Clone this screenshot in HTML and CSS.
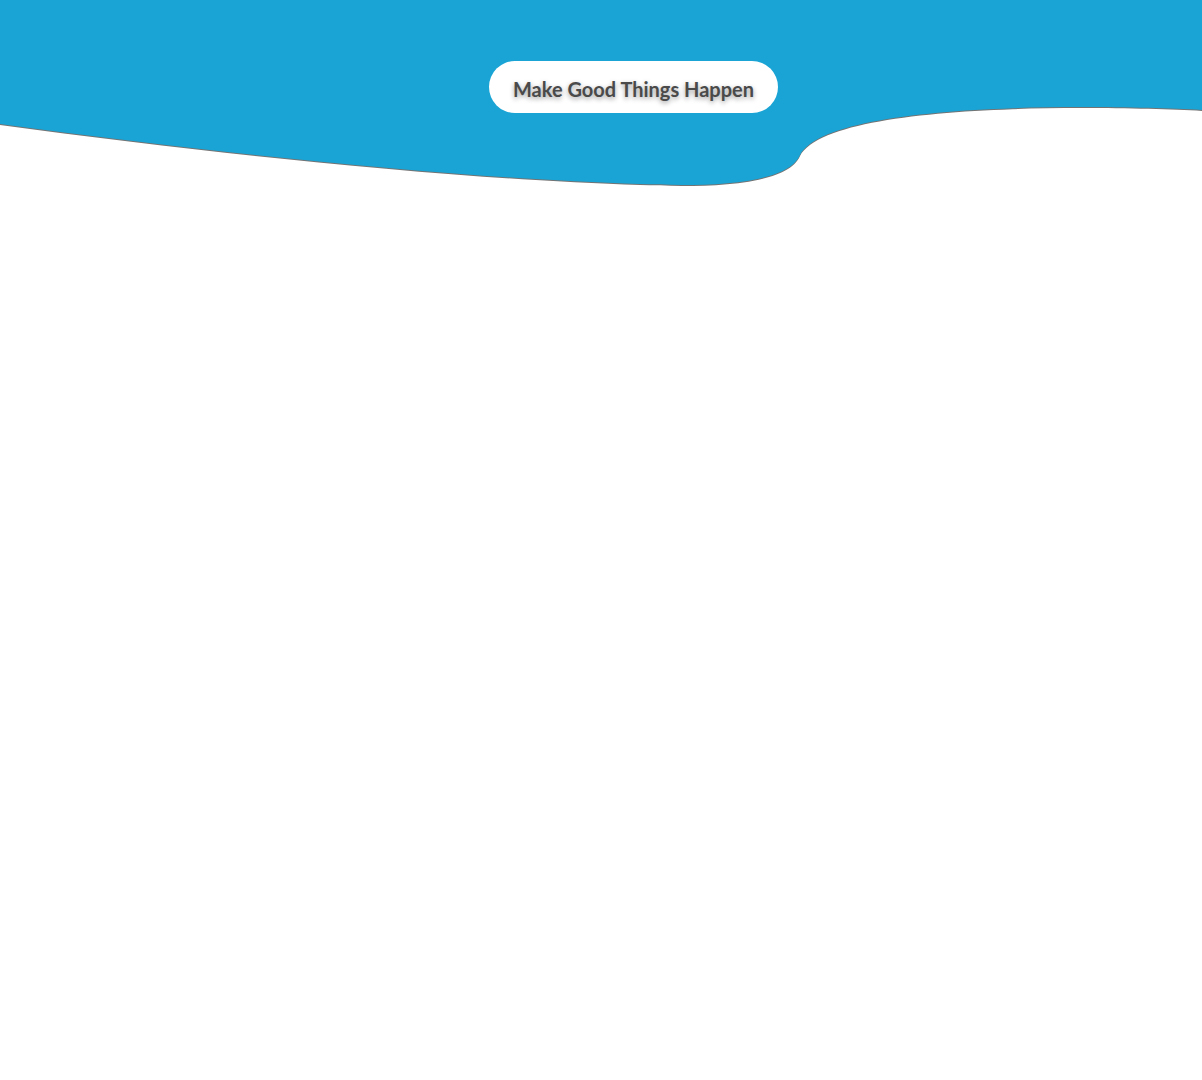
FILE: index.html
```html
<!DOCTYPE html>
<html>
<head>
<meta charset="utf-8">
<link rel="stylesheet" href="styles.css">
</head>
<body>
<header class="hero">
  <svg class="wave" viewBox="0 0 1202 200" width="1202" height="200" preserveAspectRatio="none">
    <path class="wave-shape" d="M0,0 H1202 V110 C1100,105 830,100 800,155 C786,188 690,186 640,184 C470,179 220,154 0,124 Z"/>
  </svg>
  <div class="pill">Make Good Things Happen</div>
</header>
</body>
</html>
```
FILE: styles.css
```css
html, body {
  margin: 0;
  padding: 0;
  background: #ffffff;
}
body {
  font-family: Lato, "Open Sans", sans-serif;
  width: 1202px;
  height: 1080px;
  overflow: hidden;
}
.hero {
  position: relative;
  height: 200px;
  display: flex;
  justify-content: center;
  align-items: flex-start;
  padding-top: 61px;
  box-sizing: border-box;
}
.wave {
  position: absolute;
  left: 0;
  top: 0;
  display: block;
}
.wave-shape {
  fill: #19a4d5;
  filter: drop-shadow(0 1px 0.7px rgba(0, 0, 0, 0.55));
}
.pill {
  position: relative;
  width: 289px;
  height: 52px;
  box-sizing: border-box;
  margin-left: 65px;
  background: #ffffff;
  border-radius: 26px;
  display: flex;
  align-items: center;
  justify-content: center;
  padding-top: 4px;
  font-size: 20px;
  font-weight: 700;
  letter-spacing: 0;
  color: #4a4a4a;
  text-shadow: 0 2px 5px rgba(0, 0, 0, 0.4);
}
```
